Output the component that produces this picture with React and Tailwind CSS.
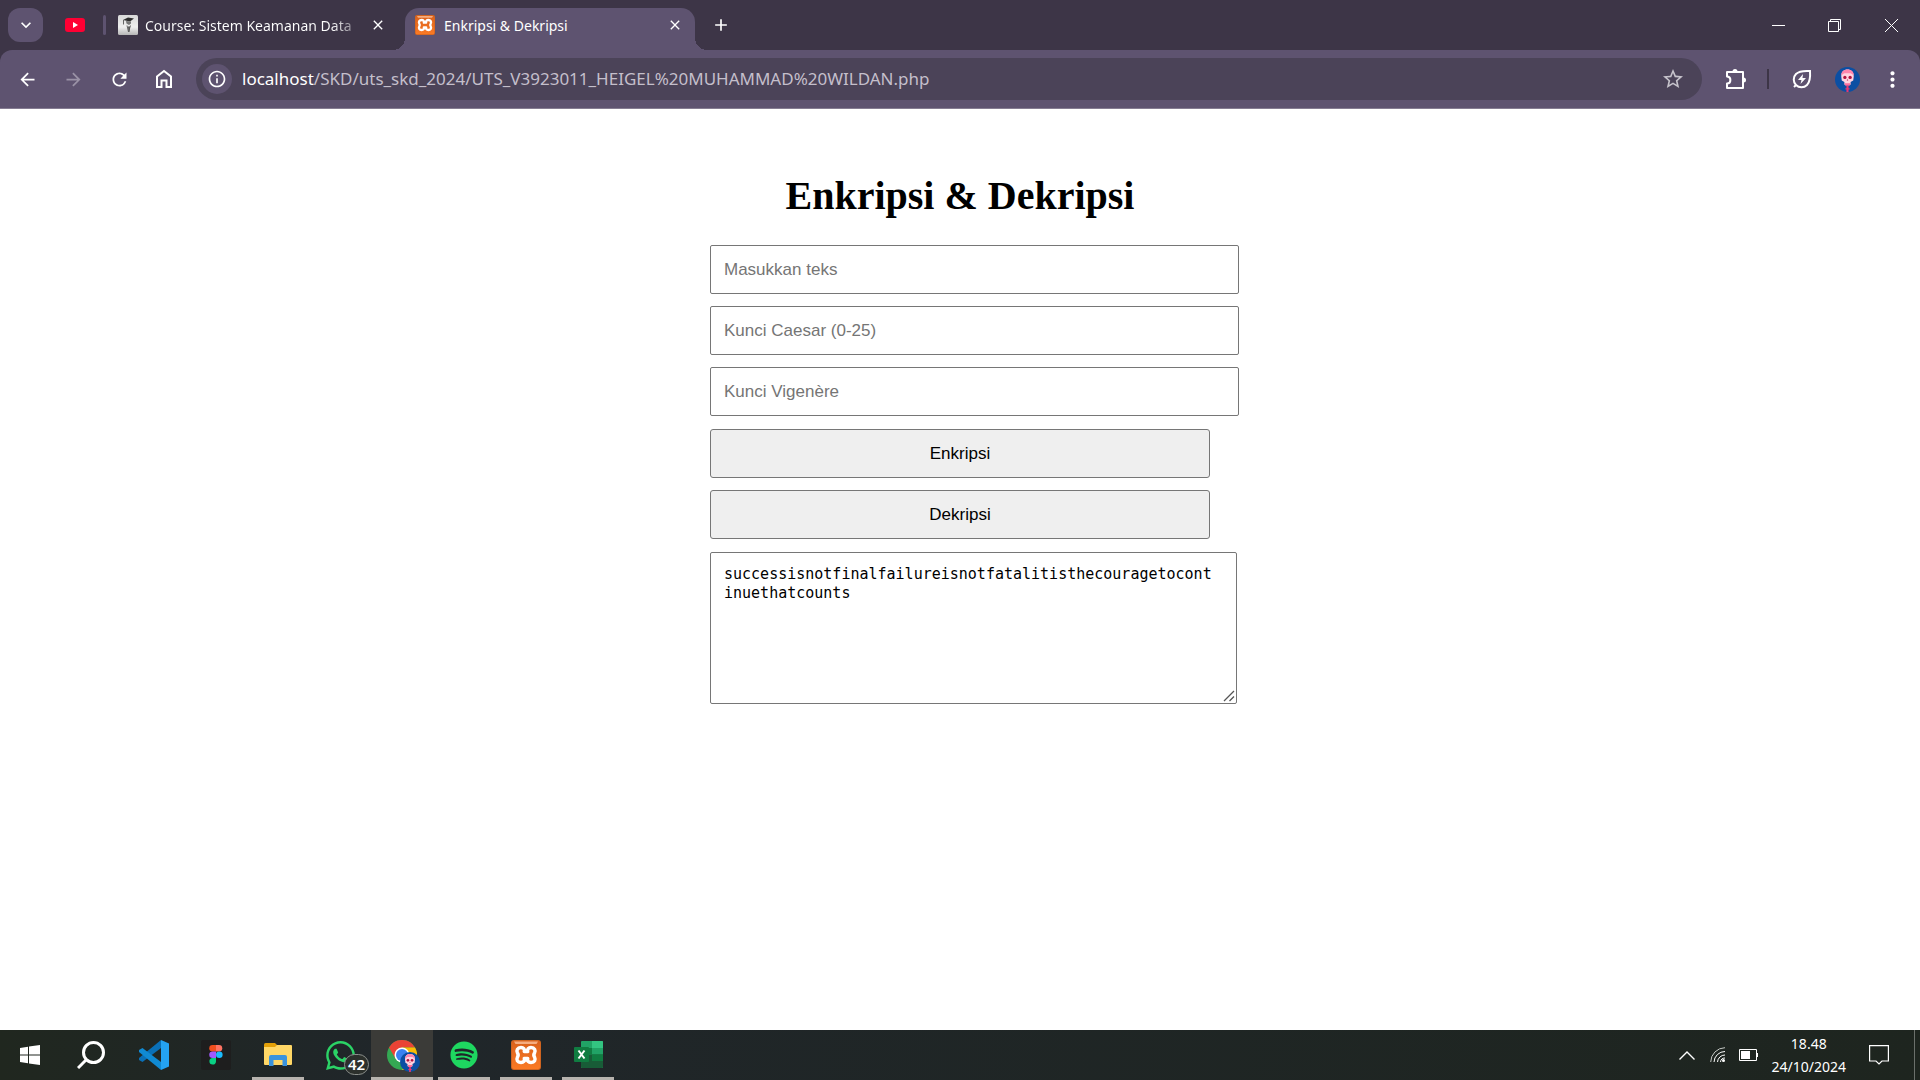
import React from "react";
import { MdRefresh, MdArrowBack, MdArrowForward, MdStarOutline, MdMoreVert, MdKeyboardArrowDown, MdClose, MdAdd, MdInfoOutline } from "react-icons/md";
import { FaWhatsapp, FaSpotify } from "react-icons/fa";

function XamppLogo({ className }) {
  return (
    <svg viewBox="0 0 30 30" className={className} aria-hidden="true">
      <defs>
        <linearGradient id="xg" x1="0" y1="0" x2="0" y2="1">
          <stop offset="0" stopColor="#d9611c" />
          <stop offset="1" stopColor="#fb7a24" />
        </linearGradient>
      </defs>
      <rect width="30" height="30" rx="3" fill="#cf6420" />
      <rect x="1" y="1" width="28" height="28" rx="2" fill="url(#xg)" />
      <path d="M3 1.5H27L25.5 4H4.500Z" fill="#f5ad80" />
      <path d="M10 7.500C6.500 7.500 5 10.500 6.500 13C7.500 14.500 7.500 15.500 6.500 17C5 20 6.500 22.500 10 22.500C12.500 22.500 14 21 13.300 18.500H16.700C16 21 17.500 22.500 20 22.500C23.500 22.500 25 20 23.500 17C22.500 15.500 22.500 14.500 23.500 13C25 10.500 23.500 7.500 20 7.500C17.500 7.500 16 9 16.700 11.500H13.300C14 9 12.500 7.500 10 7.500Z" fill="none" stroke="#fff" strokeWidth="3.500" strokeLinejoin="round" />
    </svg>
  );
}

function Skull({ className }) {
  return (
    <svg viewBox="0 0 24 24" className={className} aria-hidden="true">
      <circle cx="12" cy="12" r="12" fill="#0b4fa3" />
      <path d="M6 9C6 4.500 8.500 2.500 12 2.500S18 4.500 18 9L17.500 13L15 14.500V17H9V14.500L6.500 13Z" fill="#ffd3e0" />
      <path d="M6 8C6 4.500 8.500 2.500 12 2.500S18 4.500 18 8L15 6H9Z" fill="#ff86ad" />
      <circle cx="9.500" cy="10" r="1.600" fill="#b3123e" />
      <circle cx="14.500" cy="10" r="1.600" fill="#b3123e" />
      <path d="M11.300 13L12 11.500L12.700 13Z" fill="#b3123e" />
      <path d="M9 15.500H15L14 18H10Z" fill="#ff6f9d" />
      <path d="M11 18H13V24H11ZM10 20.500H14V21.500H10Z" fill="#e8366f" />
    </svg>
  );
}

function Task({ children, label, open, active }) {
  return (
    <button
      aria-label={label}
      className={"relative flex h-full w-[62px] shrink-0 items-center justify-center " + (active ? "bg-[#3b3b38]" : "")}
    >
      {children}
      {open && (
        <span className={"absolute bottom-0 h-[3px] bg-[#b7b3ae] " + (active ? "inset-x-0" : "inset-x-[5px]")} />
      )}
    </button>
  );
}

function Tabs() {
  return (
    <div className="flex h-[50px] items-stretch bg-[#3d3547] text-white">
      <button aria-label="Cari tab" className="ml-2 mt-2 flex h-[34px] w-[35px] items-center justify-center rounded-xl bg-[#5e5370]">
        <MdKeyboardArrowDown size={20} />
      </button>
      <button aria-label="YouTube" className="ml-[22px] flex w-5 items-center">
        <svg viewBox="0 0 20 14" className="w-5" aria-hidden="true">
          <rect width="20" height="14" rx="3" fill="#ff0033" />
          <path d="M8 4L13 7L8 10Z" fill="#fff" />
        </svg>
      </button>
      <span className="ml-[18px] mt-[15px] h-5 w-[3px] rounded bg-[#5e5370]" />
      <div className="ml-3 flex w-[287px] shrink-0 items-center">
        <svg viewBox="0 0 20 20" className="size-5 shrink-0" aria-hidden="true">
          <defs>
            <linearGradient id="cg" x1="0" y1="0" x2="0" y2="1">
              <stop offset="0" stopColor="#d8d8d8" />
              <stop offset=".6" stopColor="#efefef" />
              <stop offset="1" stopColor="#b5b5b5" />
            </linearGradient>
          </defs>
          <rect width="20" height="20" rx="1.500" fill="url(#cg)" />
          <path d="M5 5L10 2.500L16 3.500L12 6.500Z" fill="#2d2d2d" />
          <path d="M8 6L13 6.500V8.500L11 10L8.500 8.500Z" fill="#777" />
          <path d="M5.500 5V9.500M9 10.500L10.500 17L12.500 10.500" stroke="#666" fill="none" />
          <path d="M10 11.500H12L11.500 17H10.500Z" fill="#555" />
        </svg>
        <span className="ml-[7px] w-[212px] shrink-0 bg-linear-to-r from-white from-88% to-white/30 bg-clip-text text-[14px] whitespace-nowrap text-transparent">
          Course: Sistem Keamanan Data
        </span>
        <button aria-label="Tutup tab" className="ml-[13px]">
          <MdClose size={16} />
        </button>
      </div>
      <div className="relative mt-2 flex h-[42px] w-[290px] shrink-0 items-center rounded-t-[14px] bg-[#5e5370]">
        <span className="absolute bottom-0 -left-3 size-3 bg-[radial-gradient(circle_at_0_0,#3d3547_12px,#5e5370_12px)]" />
        <span className="absolute -right-3 bottom-0 size-3 bg-[radial-gradient(circle_at_100%_0,#3d3547_12px,#5e5370_12px)]" />
        <XamppLogo className="mb-2 ml-[10px] size-5" />
        <span className="mb-2 ml-[9px] grow text-[14px]">Enkripsi &amp; Dekripsi</span>
        <button aria-label="Tutup tab" className="mr-3 mb-2">
          <MdClose size={16} />
        </button>
      </div>
      <button aria-label="Tab baru" className="ml-4">
        <MdAdd size={20} />
      </button>
      <div className="ml-auto flex items-center">
        <button aria-label="Kecilkan" className="flex w-14 justify-center">
          <svg width="13" height="13" viewBox="0 0 13 13" aria-hidden="true"><path d="M0 6.500H13" stroke="#fff" /></svg>
        </button>
        <button aria-label="Pulihkan" className="flex w-14 justify-center">
          <svg width="13" height="13" viewBox="0 0 13 13" fill="none" stroke="#fff" aria-hidden="true"><path d="M.5 2.500H10.500V12.500H.5ZM2.500 2.500V.5H12.500V10.500H10.500" /></svg>
        </button>
        <button aria-label="Tutup" className="flex w-[58px] justify-center">
          <svg width="13" height="13" viewBox="0 0 13 13" stroke="#fff" aria-hidden="true"><path d="M0 0L13 13M13 0L0 13" /></svg>
        </button>
      </div>
    </div>
  );
}

function Toolbar() {
  return (
    <div className="bg-[#3d3547]">
      <div className="flex h-[59px] items-center rounded-t-xl border-b border-[#857c92] bg-[#5e5370] text-white">
        <div className="ml-[17px] flex gap-[25px]">
          <button aria-label="Kembali"><MdArrowBack size={21} /></button>
          <button aria-label="Maju" className="text-[#9a92a6]"><MdArrowForward size={21} /></button>
          <button aria-label="Muat ulang"><MdRefresh size={21} /></button>
          <button aria-label="Beranda">
            <svg width="18" height="20" viewBox="0 0 18 20" fill="none" stroke="#fff" strokeWidth="2" aria-hidden="true">
              <path d="M2 7.500L9 2L16 7.500V18H11.500V11.500H6.500V18H2Z" />
            </svg>
          </button>
        </div>
        <div className="ml-[23px] flex h-[42px] min-w-0 grow items-center rounded-full bg-[#4b4358] pr-[17px] pl-[6px]">
          <button aria-label="Info situs" className="flex size-[30px] shrink-0 items-center justify-center rounded-full bg-[#5e5370]">
            <MdInfoOutline size={20} />
          </button>
          <span className="ml-[10px] grow truncate text-[17px] text-[#c4bfcb]">
            <span className="text-white">localhost</span>/SKD/uts_skd_2024/UTS_V3923011_HEIGEL%20MUHAMMAD%20WILDAN.php
          </span>
          <button aria-label="Bookmark" className="text-[#c6c3cb]"><MdStarOutline size={24} /></button>
        </div>
        <button aria-label="Ekstensi" className="ml-[23px]">
          <svg width="22" height="22" viewBox="0 0 22 22" fill="none" stroke="#fff" strokeWidth="2" strokeLinejoin="round" aria-hidden="true">
            <path d="M2 4H18V20H2V15.500C6.500 15.500 6.500 8.500 2 8.500Z" />
            <path d="M7.500 3.500A2.500 2.500 0 0 1 12.500 3.500ZM18.500 9.500A2.500 2.500 0 0 1 18.500 14.500Z" fill="#fff" stroke="none" />
          </svg>
        </button>
        <span className="ml-5 h-5 w-[2px] bg-[#3d3547]" />
        <button aria-label="Penghemat energi" className="ml-[23px]">
          <svg width="20" height="20" viewBox="0 0 20 20" fill="none" stroke="#fff" strokeWidth="2" aria-hidden="true">
            <path d="M2 18L4 16C1 13 1 8 4 5C7 2 11 1.500 18 2C18.500 9 18 13 15 16C12 19 7 19 4 16" />
            <path d="M11 5L6 11H9.500L8.500 15L14 9H10.500Z" fill="#fff" stroke="none" />
          </svg>
        </button>
        <button aria-label="Profil" className="ml-[23px]"><Skull className="size-[25px]" /></button>
        <button aria-label="Menu" className="mr-[15px] ml-5"><MdMoreVert size={25} /></button>
      </div>
    </div>
  );
}

const field =
  "block h-[49px] w-[529px] rounded-[2px] border border-[#767676] bg-white px-[13px] font-['Liberation_Sans',sans-serif] text-[17px] text-black placeholder:text-[#757575]";
const action =
  "block h-[49px] w-full rounded-[3px] border border-[#767676] bg-[#efefef] font-['Liberation_Sans',sans-serif] text-[17px] text-black";

function Page() {
  return (
    <main className="grow bg-white">
      <form className="mx-auto w-[500px] pt-[63px]" onSubmit={(e) => e.preventDefault()}>
        <h1 className="text-center font-['Liberation_Serif',serif] text-[40px] leading-[48px] font-bold text-black">
          Enkripsi &amp; Dekripsi
        </h1>
        <div className="mt-[25px] flex flex-col gap-[13px]">
          <div className="flex flex-col gap-3">
            <input aria-label="Masukkan teks" placeholder="Masukkan teks" className={field} />
            <input aria-label="Kunci Caesar (0-25)" placeholder="Kunci Caesar (0-25)" className={field} />
            <input aria-label="Kunci Vigenère" placeholder="Kunci Vigenère" className={field} />
          </div>
          <div className="flex flex-col gap-3">
            <button className={action}>Enkripsi</button>
            <button className={action}>Dekripsi</button>
          </div>
          <div className="relative w-[527px]">
            <textarea
              aria-label="Hasil"
              spellCheck={false}
              defaultValue="successisnotfinalfailureisnotfatalitisthecouragetocontinuethatcounts"
              className="block h-[152px] w-full resize-none rounded-[2px] border border-[#767676] bg-white py-3 pr-[22px] pl-[13px] font-['DejaVu_Sans_Mono',monospace] text-[15px] leading-[19px] break-all text-black"
            />
            <svg width="12" height="12" viewBox="0 0 12 12" stroke="#555" strokeWidth="1.300" className="pointer-events-none absolute right-[2px] bottom-[2px]" aria-hidden="true">
              <path d="M1 11L11 1M6.500 11L11 6.500" />
            </svg>
          </div>
        </div>
      </form>
    </main>
  );
}

function Taskbar() {
  return (
    <footer className="flex h-[50px] shrink-0 items-center bg-linear-to-r from-[#20271f] via-[#20262a] via-20% to-[#1e251f] text-white">
      <button aria-label="Mulai" className="flex w-[60px] justify-center">
        <svg width="20" height="20" viewBox="0 0 20 20" fill="#fff" aria-hidden="true">
          <path d="M0 3L8 1.800V9.500H0ZM9 1.600L20 0V9.500H9ZM0 10.500H8V18.200L0 17ZM9 10.500H20V20L9 18.400Z" />
        </svg>
      </button>
      <button aria-label="Cari" className="mr-[2px] flex w-[61px] justify-center">
        <svg width="28" height="28" viewBox="0 0 28 28" fill="none" stroke="#fff" strokeWidth="3" aria-hidden="true">
          <circle cx="16.500" cy="11.500" r="10" />
          <path d="M9.500 18.500L1 27" />
        </svg>
      </button>
      <Task label="Visual Studio Code">
        <svg width="30" height="30" viewBox="0 0 30 30" aria-hidden="true">
          <path d="M22 0V8L3.500 22L0 20V18Z" fill="#0a70b7" />
          <path d="M3.500 8L22 22V30L0 12V10Z" fill="#108ad3" />
          <path d="M22 0L30 3.500V26.500L22 30V0Z" fill="#24a3f2" />
        </svg>
      </Task>
      <Task label="Figma">
        <svg width="30" height="30" viewBox="0 0 30 30" aria-hidden="true">
          <rect width="30" height="30" rx="2" fill="#1e1e1e" />
          <path d="M15 5H11.500A3.200 3.200 0 0 0 11.500 11.500H15Z" fill="#f24e1e" />
          <path d="M15 5H18A3.200 3.200 0 0 1 18 11.500H15Z" fill="#ff7262" />
          <path d="M15 11.500H11.500A3.200 3.200 0 0 0 11.500 18H15Z" fill="#a259ff" />
          <circle cx="18.300" cy="14.800" r="3.300" fill="#1abcfe" />
          <path d="M15 18H11.500A3.300 3.300 0 1 0 15 21.500Z" fill="#0acf83" />
        </svg>
      </Task>
      <Task label="File Explorer" open>
        <svg width="28" height="24" viewBox="0 0 28 24" aria-hidden="true">
          <path d="M0 1.500Q0 0 1.500 0H11L13 2V6H0Z" fill="#e3a008" />
          <path d="M0 4H11L13 2H27Q28 2 28 3V21Q28 22 27 22H1Q0 22 0 21Z" fill="#ffd766" />
          <path d="M5 23V14Q5 12 7 12H21Q23 12 23 14V23H18.500V17H9.500V23Z" fill="#3a93dd" />
        </svg>
      </Task>
      <Task label="WhatsApp">
        <FaWhatsapp size={33} color="#2bd366" />
        <span className="absolute top-[24px] right-[2px] flex h-[21px] w-[25px] items-center justify-center rounded-full border border-[#8b8f8b] bg-[#2c302c] text-[15px] font-semibold">42</span>
      </Task>
      <Task label="Google Chrome" open active>
        <svg width="30" height="30" viewBox="0 0 30 30" aria-hidden="true">
          <circle cx="15" cy="15" r="15" fill="#34a853" />
          <path d="M2 7.500A15 15 0 0 1 28 7.500H15L8.500 18.750Z" fill="#ea4335" />
          <path d="M28 7.500A15 15 0 0 1 15 30L21.500 18.750L15 7.500Z" fill="#fbbc04" />
          <circle cx="15" cy="15" r="7.500" fill="#fff" />
          <circle cx="15" cy="15" r="6" fill="#3b82f0" />
        </svg>
        <Skull className="absolute top-[22px] right-[13px] size-5" />
      </Task>
      <Task label="Spotify" open><FaSpotify size={28} color="#1ed760" /></Task>
      <Task label="XAMPP" open><XamppLogo className="size-[30px]" /></Task>
      <Task label="Excel" open>
        <svg width="29" height="28" viewBox="0 0 29 28" aria-hidden="true">
          <rect x="7" width="22" height="27" rx="1" fill="#21a366" />
          <path d="M18 0H28Q29 0 29 1V7H18Z" fill="#33c481" />
          <path d="M7 13.500H18V7H7Z" fill="#107c41" />
          <path d="M7 13.500H29V26Q29 27 28 27H8Q7 27 7 26Z" fill="#185c37" />
          <path d="M18 13.500H29V20H18Z" fill="#107c41" />
          <rect y="6" width="15" height="15" rx="1" fill="#107c41" />
          <path d="M4.500 9.500L10.500 17.500M10.500 9.500L4.500 17.500" stroke="#fff" strokeWidth="2" />
        </svg>
      </Task>
      <div className="ml-auto flex h-full items-center">
        <button aria-label="Ikon tersembunyi">
          <svg width="16" height="9" viewBox="0 0 16 9" fill="none" stroke="#fff" strokeWidth="1.400" aria-hidden="true"><path d="M.5 8.500L8 1L15.500 8.500" /></svg>
        </button>
        <svg width="16" height="16" viewBox="0 0 16 16" fill="none" stroke="#fff" className="ml-[15px]" aria-hidden="true">
          <path d="M.7 15A14.500 14.500 0 0 1 15 .7" stroke="#c4c8c4" />
          <path d="M4 15A11 11 0 0 1 15 4.500M7.500 15A7.500 7.500 0 0 1 15 8" />
          <circle cx="13.500" cy="13.500" r="1.500" fill="#fff" stroke="none" />
          <path d="M10.500 15A4.500 4.500 0 0 1 15 11" />
        </svg>
        <svg width="19" height="12" viewBox="0 0 19 12" fill="none" stroke="#fff" className="ml-[13px]" aria-hidden="true">
          <path d="M.5 .5H17.500V11.500H.5Z" /><path d="M2 2H11V10H2Z" fill="#fff" stroke="none" /><path d="M18.500 4V8" />
        </svg>
        <div className="ml-[14px] text-center text-[14px] leading-[23px]">
          <div>18.48</div>
          <div>24/10/2024</div>
        </div>
        <button aria-label="Notifikasi" className="ml-[23px]">
          <svg width="20" height="20" viewBox="0 0 20 20" fill="none" stroke="#fff" strokeWidth="1.200" aria-hidden="true"><path d="M.6 .6H19.400V16H13L10 19L7 16H.6Z" /></svg>
        </button>
        <span className="mr-[5px] ml-[25px] h-full w-px bg-[#6b706b]" />
      </div>
    </footer>
  );
}

export default function App() {
  return (
    <div className="flex min-h-screen flex-col bg-white font-['Noto_Sans',sans-serif]">
      <header>
        <Tabs />
        <Toolbar />
      </header>
      <Page />
      <Taskbar />
    </div>
  );
}
